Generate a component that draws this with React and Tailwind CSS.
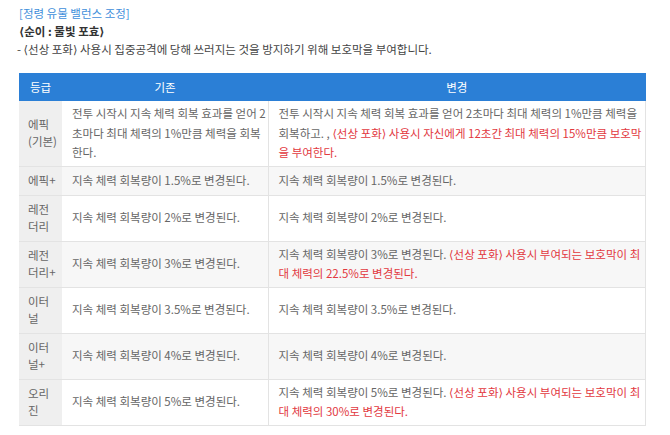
const rows = [
  {
    grade: ['에픽', '(기본)'],
    before: ['전투 시작시 지속 체력 회복 효과를 얻어 2', '초마다 최대 체력의 1%만큼 체력을 회복', '한다.'],
    after: ['전투 시작시 지속 체력 회복 효과를 얻어 2초마다 최대 체력의 1%만큼 체력을', '회복하고. , '],
    red: ['⟨선상 포화⟩ 사용시 자신에게 12초간 최대 체력의 15%만큼 보호막', '을 부여한다.'],
  },
  { grade: ['에픽+'], before: ['지속 체력 회복량이 1.5%로 변경된다.'], after: ['지속 체력 회복량이 1.5%로 변경된다.'] },
  { grade: ['레전', '더리'], before: ['지속 체력 회복량이 2%로 변경된다.'], after: ['지속 체력 회복량이 2%로 변경된다.'] },
  {
    grade: ['레전', '더리+'],
    before: ['지속 체력 회복량이 3%로 변경된다.'],
    after: ['지속 체력 회복량이 3%로 변경된다. '],
    red: ['⟨선상 포화⟩ 사용시 부여되는 보호막이 최', '대 체력의 22.5%로 변경된다.'],
  },
  { grade: ['이터', '널'], before: ['지속 체력 회복량이 3.5%로 변경된다.'], after: ['지속 체력 회복량이 3.5%로 변경된다.'] },
  { grade: ['이터', '널+'], before: ['지속 체력 회복량이 4%로 변경된다.'], after: ['지속 체력 회복량이 4%로 변경된다.'] },
  {
    grade: ['오리', '진'],
    before: ['지속 체력 회복량이 5%로 변경된다.'],
    after: ['지속 체력 회복량이 5%로 변경된다. '],
    red: ['⟨선상 포화⟩ 사용시 부여되는 보호막이 최', '대 체력의 30%로 변경된다.'],
  },
];

function Lines({ parts }) {
  return parts.map((p, i) => (
    <span key={i}>
      {i > 0 && <br />}
      {p}
    </span>
  ));
}

export default function App() {
  return (
    <div className="w-[670px] h-[435px] bg-white overflow-hidden pt-[4px] pl-[19px] text-[11.5px] leading-[18px]" style={{ fontFamily: '"Noto Sans CJK KR", "DejaVu Sans", sans-serif' }}>
      <p className="text-[#3f8fdb]">[정령 유물 밸런스 조정]</p>
      <p className="font-bold text-[#333]">⟨순이 : 물빛 포효⟩</p>
      <p className="-ml-[2px] text-[#444]">- ⟨선상 포화⟩ 사용시 집중공격에 당해 쓰러지는 것을 방지하기 위해 보호막을 부여합니다.</p>

      {/* Table */}
      <table className="mt-[15px] w-[627px] border-collapse table-fixed">
        <thead>
          <tr className="bg-[#2b7fd6] text-white h-[28px]">
            <th className="w-[43px] font-normal text-center">등급</th>
            <th className="w-[206px] font-normal text-center">기존</th>
            <th className="font-normal text-center">변경</th>
          </tr>
        </thead>
        <tbody className="text-[#666] leading-[19.5px]">
          {rows.map((r, i) => (
            <tr key={i} className={`border-b border-[#e3e3e3] ${i % 2 === 1 ? 'bg-[#f7f7f7]' : 'bg-white'}`}>
              <td className="bg-[#efefef] pl-[9px] pr-0 py-[5.5px] leading-[17px] align-middle whitespace-nowrap">
                {r.grade.map((g, j) => <div key={j}>{g}</div>)}
              </td>
              <td className="pl-[10px] pr-0 py-[3px] align-middle whitespace-nowrap border-r border-[#e3e3e3]">
                <Lines parts={r.before} />
              </td>
              <td className="pl-[10px] pr-0 py-[3px] align-middle whitespace-nowrap border-r border-[#e3e3e3]">
                <Lines parts={r.after} />
                {r.red && (
                  <span className="text-[#e2393f]">
                    <Lines parts={r.red} />
                  </span>
                )}
              </td>
            </tr>
          ))}
        </tbody>
      </table>
    </div>
  );
}
